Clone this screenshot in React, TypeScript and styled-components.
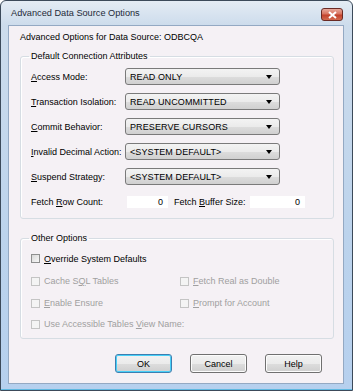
import styled, { createGlobalStyle } from 'styled-components';

const GlobalStyle = createGlobalStyle`
    html, body {
        margin: 0;
        padding: 0;
        background: #ffffff;
    }
    body {
        font-family: 'Liberation Sans', Arial, sans-serif;
        font-size: 9px;
        color: #000000;
    }
`;

const Window = styled.div`
    box-sizing: border-box;
    width: 353px;
    height: 391px;
    border: 1px solid #3c4a5a;
    border-radius: 6px 6px 0 0;
    background: linear-gradient(180deg, #e4ecf4 0px, #cddcec 24px, #bcd3ec 60%, #b6d0ee 100%);
    display: flex;
    flex-direction: column;
    padding: 0 8px 6px 7px;
    box-shadow: inset 0 -1px 0 #5fb8e0;
`;

const TitleBar = styled.div`
    height: 24px;
    display: flex;
    align-items: center;
    justify-content: space-between;
    padding: 0 1px 0 3px;
    font-size: 9.2px;
    color: #1e2a38;
`;

const CloseButton = styled.div`
    width: 22px;
    height: 13px;
    margin-top: 3px;
    border: 1px solid #6a2a24;
    border-radius: 3px;
    background: linear-gradient(180deg, #e8a99c 0%, #d8735f 45%, #c2412c 55%, #d26a4f 100%);
    display: flex;
    align-items: center;
    justify-content: center;
    box-sizing: border-box;
`;

const Client = styled.div`
    flex: 1;
    border: 1px solid #94a9c3;
    background: #f5f1f5;
    display: flex;
    flex-direction: column;
    padding: 5px 9px 0 11px;
`;

const Heading = styled.div`
    height: 12px;
    line-height: 12px;
    margin-bottom: 8px;
`;

const Group = styled.fieldset<{ $height: number }>`
    margin: 0;
    padding: 0 0 0 10px;
    height: ${({ $height }) => $height}px;
    box-sizing: border-box;
    border: 1px solid #d6dde3;
    border-radius: 3px;
    box-shadow: inset 1px 1px 0 #ffffff;
    display: flex;
    flex-direction: column;
`;

const Legend = styled.legend`
    padding: 0 2px;
    margin-left: -2px;
    line-height: 11px;
`;

const Spacer = styled.div<{ $h: number }>`
    height: ${({ $h }) => $h}px;
    flex-shrink: 0;
`;

const FieldRow = styled.div`
    display: flex;
    align-items: center;
    height: 25px;
`;

const Label = styled.div<{ $width: number; $indent?: number }>`
    width: ${({ $width }) => $width}px;
    padding-left: ${({ $indent }) => $indent ?? 0}px;
    box-sizing: border-box;
    white-space: nowrap;
    flex-shrink: 0;
`;

const Combo = styled.div`
    box-sizing: border-box;
    width: 155px;
    height: 17px;
    border: 1px solid #7a7a7a;
    border-radius: 3px;
    background: linear-gradient(180deg, #f3f3f3 0%, #ebebeb 50%, #dddddd 51%, #d0d0d0 100%);
    display: flex;
    align-items: center;
    justify-content: space-between;
    padding: 0 7px 0 4px;
    letter-spacing: 0.1px;
`;

const Arrow = styled.span`
    width: 0;
    height: 0;
    border-left: 3.5px solid transparent;
    border-right: 3.5px solid transparent;
    border-top: 4px solid #000000;
`;

const NumberBox = styled.div<{ $width: number }>`
    width: ${({ $width }) => $width}px;
    height: 12px;
    flex-shrink: 0;
    background: #ffffff;
    text-align: right;
    padding-right: 5px;
    box-sizing: border-box;
    line-height: 12px;
`;

const CheckRow = styled.div<{ $h: number }>`
    display: flex;
    align-items: center;
    height: ${({ $h }) => $h}px;
`;

const CheckItem = styled.label<{ $disabled?: boolean; $width?: number }>`
    display: flex;
    align-items: center;
    gap: 4px;
    white-space: nowrap;
    width: ${({ $width }) => ($width ? `${$width}px` : 'auto')};
    color: ${({ $disabled }) => ($disabled ? '#a0a0a0' : '#000000')};
`;

const Box = styled.span<{ $disabled?: boolean }>`
    box-sizing: border-box;
    width: 9px;
    height: 9px;
    border: 1px solid ${({ $disabled }) => ($disabled ? '#c4c4c4' : '#8e8f8f')};
    background: ${({ $disabled }) => ($disabled ? '#f4f4f4' : 'linear-gradient(135deg, #d8d8d8, #f8f8f8)')};
`;

const ButtonBar = styled.div`
    display: flex;
    justify-content: flex-end;
    gap: 18px;
    padding: 15px 12px 0 0;
`;

const Button = styled.div<{ $default?: boolean }>`
    box-sizing: border-box;
    width: 57px;
    height: 19px;
    border: 1px solid ${({ $default }) => ($default ? '#3c7fb1' : '#707070')};
    border-radius: 3px;
    background: linear-gradient(180deg, #f2f2f2 0%, #ebebeb 50%, #dddddd 51%, #cfcfcf 100%);
    box-shadow: ${({ $default }) => ($default ? 'inset 0 0 0 1px #48d0f8' : 'inset 0 0 0 1px #fcfcfc')};
    display: flex;
    align-items: center;
    justify-content: center;
`;

const U = styled.span`
    text-decoration: underline;
`;

const combos = [
    { label: <><U>A</U>ccess Mode:</>, value: 'READ ONLY' },
    { label: <><U>T</U>ransaction Isolation:</>, value: 'READ UNCOMMITTED' },
    { label: <><U>C</U>ommit Behavior:</>, value: 'PRESERVE CURSORS' },
    { label: <><U>I</U>nvalid Decimal Action:</>, value: '<SYSTEM DEFAULT>' },
    { label: <><U>S</U>uspend Strategy:</>, value: '<SYSTEM DEFAULT>' },
];

const App = () => {
    return (
        <>
            <GlobalStyle />
            <Window>
                <TitleBar>
                    <span>Advanced Data Source Options</span>
                    <CloseButton>
                        <svg width="9" height="8" viewBox="0 0 9 8">
                            <path d="M1 1 L8 7 M8 1 L1 7" stroke="#ffffff" strokeWidth="2" />
                        </svg>
                    </CloseButton>
                </TitleBar>
                <Client>
                    <Heading>Advanced Options for Data Source: ODBCQA</Heading>
                    <Group $height={168}>
                        <Legend>Default Connection Attributes</Legend>
                        <Spacer $h={2} />
                        {combos.map((c, i) => (
                            <FieldRow key={i}>
                                <Label $width={94}>{c.label}</Label>
                                <Combo>
                                    <span>{c.value}</span>
                                    <Arrow />
                                </Combo>
                            </FieldRow>
                        ))}
                        <FieldRow>
                            <Label $width={96}>Fetch <U>R</U>ow Count:</Label>
                            <NumberBox $width={41}>0</NumberBox>
                            <Label $width={82} $indent={6}>Fetch <U>B</U>uffer Size:</Label>
                            <NumberBox $width={55}>0</NumberBox>
                        </FieldRow>
                    </Group>
                    <Spacer $h={14} />
                    <Group $height={106}>
                        <Legend>Other Options</Legend>
                        <Spacer $h={3} />
                        <CheckRow $h={23}>
                            <CheckItem><Box /> <span><U>O</U>verride System Defaults</span></CheckItem>
                        </CheckRow>
                        <CheckRow $h={22}>
                            <CheckItem $disabled $width={149}><Box $disabled /> <span>Cache S<U>Q</U>L Tables</span></CheckItem>
                            <CheckItem $disabled><Box $disabled /> <span><U>F</U>etch Real as Double</span></CheckItem>
                        </CheckRow>
                        <CheckRow $h={22}>
                            <CheckItem $disabled $width={149}><Box $disabled /> <span><U>E</U>nable Ensure</span></CheckItem>
                            <CheckItem $disabled><Box $disabled /> <span><U>P</U>rompt for Account</span></CheckItem>
                        </CheckRow>
                        <CheckRow $h={20}>
                            <CheckItem $disabled><Box $disabled /> <span>Use Accessible Tables <U>V</U>iew Name:</span></CheckItem>
                        </CheckRow>
                    </Group>
                    <ButtonBar>
                        <Button $default>OK</Button>
                        <Button>Cancel</Button>
                        <Button>Help</Button>
                    </ButtonBar>
                </Client>
            </Window>
        </>
    );
};

export default App;
